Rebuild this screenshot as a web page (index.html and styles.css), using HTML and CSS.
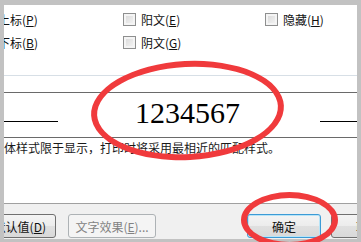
FILE: index.html
```html
<!DOCTYPE html>
<html lang="zh-CN">

<head>
    <meta charset="UTF-8">
    <title>字体</title>
    <link rel="stylesheet" href="styles.css">
</head>

<body>
    <div class="dlg">
        <!-- effects options -->
        <div class="opts">
            <div class="opt">上标(<u>P</u>)</div>
            <div class="opt"><span class="chk"></span>阳文(<u>E</u>)</div>
            <div class="opt"><span class="chk"></span>隐藏(<u>H</u>)</div>
            <div class="opt">下标(<u>B</u>)</div>
            <div class="opt"><span class="chk"></span>阴文(<u>G</u>)</div>
            <div class="opt"></div>
        </div>

        <!-- preview -->
        <div class="group">
            <div class="preview">
                <span class="rule"></span>
                <span class="sample">1234567</span>
                <span class="rule rest"></span>
            </div>
            <p class="note">此字体样式限于显示，打印时将采用最相近的匹配样式。</p>
        </div>

        <!-- buttons -->
        <div class="footer">
            <button class="btn btn-default">设为默认值(<u>D</u>)</button>
            <button class="btn btn-effects" disabled>文字效果(<u>E</u>)...</button>
            <button class="btn btn-ok">确定</button>
            <button class="btn btn-cancel">取消</button>
        </div>
    </div>

    <!-- red marks drawn over the screenshot -->
    <div class="mark mark-sample"></div>
    <div class="mark mark-ok"></div>
</body>

</html>
```

FILE: styles.css
```css
body {
    margin: 0;
    width: 361px;
    height: 242px;
    overflow: hidden;
    position: relative;
    background-color: #c2c2c2;
    font-family: "Noto Sans CJK SC", "DejaVu Sans", sans-serif;
    font-size: 12px;
    color: #111;
}

.dlg {
    margin: 5px 4px 0 4px;
    height: 234px;
    background-color: #fff;
    overflow: hidden;
    display: flex;
    flex-direction: column;
}

.opts {
    display: grid;
    grid-template-columns: 125px 142px auto;
    grid-auto-rows: 23px;
    margin-left: -6px;
    padding-top: 3px;
}

.opt {
    display: flex;
    align-items: center;
    white-space: nowrap;
    line-height: 16px;
}

.chk {
    width: 11px;
    height: 11px;
    margin-right: 5px;
    border: 1px solid #8e8f8f;
    background: linear-gradient(135deg, #d6d6d6, #f7f7f7);
    box-shadow: inset 0 0 0 2px #f4f4f4;
}

.group {
    margin-top: 21px;
    border-top: 1px solid #d7dfe6;
    padding-top: 16px;
}

.preview {
    display: flex;
    height: 44px;
    border-top: 1px solid #6a6a6a;
    border-bottom: 1px solid #6a6a6a;
}

.rule {
    width: 54px;
    height: 28px;
    border-bottom: 1px solid #000;
}

.rule.rest {
    flex: 1;
}

.sample {
    width: 185px;
    margin-left: 77px;
    padding-top: 5px;
    font-family: "Liberation Serif", serif;
    font-size: 30px;
    line-height: 30px;
    color: #000;
}

.note {
    margin: 2px 0 0 -24px;
    line-height: 16px;
    white-space: nowrap;
    color: #1a1a1a;
}

.footer {
    margin-top: auto;
    height: 36px;
    border-top: 1px solid #a0a0a0;
    background-color: #f0f0f0;
    display: flex;
    align-items: flex-start;
    padding-top: 10px;
    box-sizing: border-box;
}

.btn {
    height: 24px;
    padding: 0;
    border: 1px solid #707070;
    border-radius: 3px;
    background: linear-gradient(#f4f4f4 0%, #ececec 50%, #e0e0e0 51%, #d9d9d9 100%);
    font-family: "Noto Sans CJK SC", "DejaVu Sans", sans-serif;
    font-size: 12px;
    color: #111;
    white-space: nowrap;
    flex-shrink: 0;
}

.btn-default {
    width: 88px;
    margin-left: -36px;
    text-align: right;
    padding-right: 9px;
}

.btn-effects {
    width: 88px;
    margin-left: 12px;
    border-color: #adb2b5;
    background: #f4f4f4;
    color: #838383;
}

.btn-ok {
    width: 74px;
    margin-left: 91px;
    border-color: #3c9bd6;
    box-shadow: inset 0 0 0 1px #b8e4f7;
}

.btn-cancel {
    width: 74px;
    margin-left: 10px;
}

.mark {
    position: absolute;
    border: 6px solid #f03a3c;
    border-radius: 50%;
    box-sizing: border-box;
}

.mark-sample {
    left: 91px;
    top: 61px;
    width: 193px;
    height: 99px;
    transform: rotate(-3deg);
}

.mark-ok {
    left: 241px;
    top: 192px;
    width: 97px;
    height: 56px;
}
```
